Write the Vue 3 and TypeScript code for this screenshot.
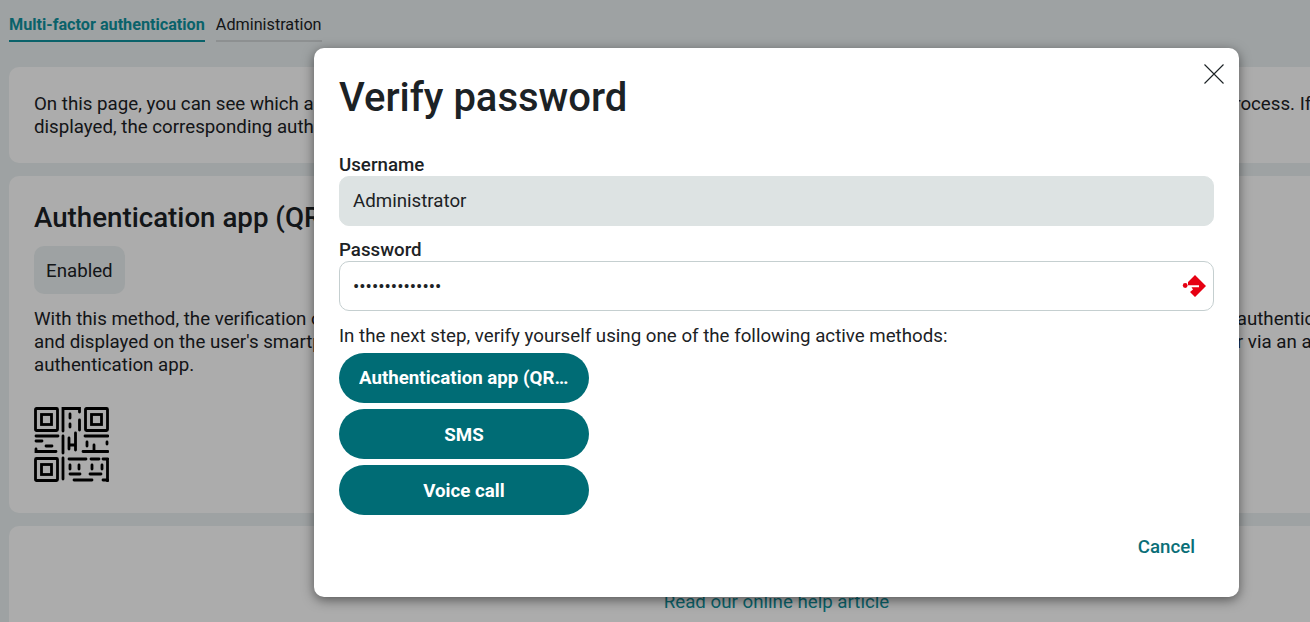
<template>
  <div class="page">
    <nav class="tabs">
      <a class="tab active">Multi-factor authentication</a>
      <a class="tab">Administration</a>
    </nav>

    <section class="card intro">
      <p class="line">On this page, you can see which authentication methods are available for your account and which of them can be chosen during the verification process. If</p>
      <p class="line">displayed, the corresponding authentication method is already active for this account.</p>
    </section>

    <section class="card method">
      <h2>Authentication app (QR code)</h2>
      <span class="tag">Enabled</span>
      <p class="line">With this method, the verification code is generated by an app on a mobile device and you will be asked to enter it when logging in. Then open the authentication</p>
      <p class="line">and displayed on the user's smartphone. Any code is valid for only a short time, and after scanning the QR code the setup is completed by the user via an a</p>
      <p class="line">authentication app.</p>
      <svg class="qr" width="75" height="75" viewBox="0 0 75 75" fill="none" stroke="#000" stroke-width="2.8" stroke-linecap="round">
        <rect x="1.5" y="1.5" width="22" height="22" rx="1" />
        <rect x="7.5" y="7.5" width="10" height="10" />
        <rect x="51.5" y="1.5" width="22" height="22" rx="1" />
        <rect x="57.5" y="7.5" width="10" height="10" />
        <rect x="1.5" y="51.5" width="22" height="22" rx="1" />
        <rect x="7.5" y="57.5" width="10" height="10" />
        <path d="M29 24V1.500H45.500V5M36 7V11M36 17V20M45.500 13V23" />
        <path d="M2 29H24M2 34H8M12 39H18M2 42V44.500H22M29 29V46M41.500 26V43M35 31V42M35 38H41" />
        <path d="M51 29H74M53 35V39M60 38V44M73 35V37M49 44.500H74" />
        <path d="M29 51V72M35 52H52M57 52H65M69 52H74M73.500 52V74M36 58V62M45 58V62M58 58V62M68 58V62M36 67H46M56 67H67M40 73H58M69 73H74" />
      </svg>
    </section>

    <section class="card help">
      <a class="help-link">Read our online help article</a>
    </section>

    <div class="overlay">
      <div class="modal">
        <button class="close" aria-label="Close">
          <svg width="20" height="20" viewBox="0 0 20 20" fill="none" stroke="#1c2225" stroke-width="1.1">
            <path d="M.5.5l19 19M19.500.5l-19 19" />
          </svg>
        </button>
        <h1>Verify password</h1>

        <label class="label">Username</label>
        <div class="input readonly">Administrator</div>

        <label class="label second">Password</label>
        <div class="input password">
          <span class="dots">{{ dots }}</span>
          <svg width="24" height="24" viewBox="0 0 24 24" fill="#e60012">
            <path d="M13 1 24 12 13 23 8 18 11 15.500 9.500 13.300H17V11.300H6V8Z" />
            <circle cx="3.200" cy="11.500" r="2.400" />
          </svg>
        </div>

        <p class="hint">In the next step, verify yourself using one of the following active methods:</p>
        <div class="methods">
          <button v-for="m in methods" :key="m" class="pill"><span>{{ m }}</span></button>
        </div>

        <div class="actions">
          <button class="cancel">Cancel</button>
        </div>
      </div>
    </div>
  </div>
</template>

<script setup lang="ts">
const methods: string[] = ['Authentication app (QR code)', 'SMS', 'Voice call']
const dots = '•'.repeat(14)
</script>

<style scoped>
.page {
  position: relative;
  height: 622px;
  overflow: hidden;
  background: #ebf1f2;
  font-family: Roboto, "Liberation Sans", sans-serif;
  color: #1c2225;
  font-size: 18.72px;
  line-height: 23px;
}

.tabs {
  display: flex;
  gap: 11px;
  padding: 13px 9px 0;
  height: 54px;
  box-sizing: border-box;
}

.tab {
  height: 29px;
  line-height: 24px;
  font-size: 16.2px;
  border-bottom: 2px solid #d2d6d7;
  box-sizing: border-box;
  white-space: nowrap;
}

.tab.active {
  color: #0f929e;
  font-weight: 700;
  border-bottom-color: #0f929e;
}

.card {
  width: 1535px;
  margin: 0 0 13px 9px;
  padding: 26px 25px 25px;
  box-sizing: border-box;
  background: #fff;
  border-radius: 10px;
}

.intro {
  height: 96px;
  margin-top: 13px;
}

.method {
  height: 337px;
}

.line {
  margin: 0;
  white-space: nowrap;
}

h2 {
  margin: 0 0 12px;
  font-size: 27.7px;
  line-height: 32px;
  font-weight: 500;
}

.tag {
  display: block;
  width: fit-content;
  height: 48px;
  line-height: 50px;
  margin-bottom: 14px;
  padding: 0 12px;
  background: #ebf1f2;
  border-radius: 10px;
}

.qr {
  display: block;
  margin-top: 30px;
}

.help {
  height: 120px;
  text-align: center;
  padding-top: 65px;
}

.help-link {
  color: #0f929e;
  white-space: nowrap;
}

.overlay {
  position: absolute;
  inset: 0;
  background: rgba(0, 0, 0, 0.325);
}

.modal {
  position: absolute;
  left: 314px;
  top: 48px;
  width: 925px;
  height: 549px;
  box-sizing: border-box;
  padding: 26px 25px 25px;
  background: #fff;
  border-radius: 10px;
  box-shadow: 0 3px 12px rgba(0, 0, 0, 0.5);
}

.close {
  position: absolute;
  top: 16px;
  right: 15px;
  padding: 0;
  border: none;
  background: none;
  line-height: 0;
}

h1 {
  margin: 0 0 31px;
  font-size: 40px;
  line-height: 48px;
  font-weight: 500;
}

.label {
  display: block;
  height: 23px;
  font-weight: 500;
  line-height: 25px;
}

.label.second {
  margin-top: 12px;
}

.input {
  height: 50px;
  line-height: 48px;
  box-sizing: border-box;
  padding: 0 13px;
  border: 1px solid #c5cfd0;
  border-radius: 10px;
}

.input.readonly {
  background: #dde3e3;
  border-color: #dde3e3;
}

.password {
  display: flex;
  justify-content: space-between;
  align-items: center;
  padding-right: 7px;
}

.dots {
  padding-top: 2px;
}

.hint {
  height: 23px;
  line-height: 25px;
  margin: 13px 0 6px;
}

.methods {
  display: flex;
  flex-direction: column;
  gap: 6px;
  width: 250px;
}

.pill {
  height: 50px;
  padding: 2px 20px 0;
  border: none;
  border-radius: 25px;
  background: #006c75;
  color: #fff;
  font: 700 18.72px Roboto, sans-serif;
}

.pill:first-child {
  padding-top: 0;
}

.pill span {
  display: block;
  overflow: hidden;
  white-space: nowrap;
  text-overflow: ellipsis;
}

.actions {
  display: flex;
  justify-content: flex-end;
  margin-top: 6px;
}

.cancel {
  height: 50px;
  padding: 2px 19px 0;
  border: none;
  background: none;
  color: #0a6f78;
  font: 500 18.72px Roboto, sans-serif;
}
</style>
